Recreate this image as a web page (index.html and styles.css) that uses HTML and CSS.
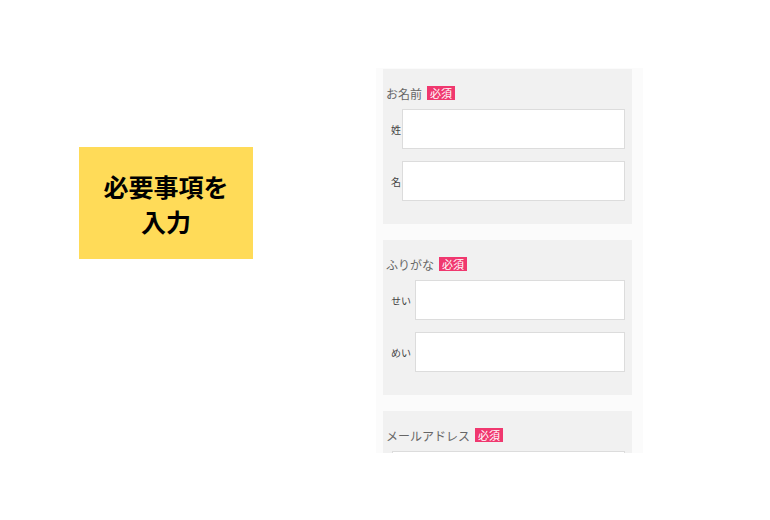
FILE: index.html
```html
<!DOCTYPE html>
<html lang="ja">
<head>
    <meta charset="UTF-8">
    <meta name="viewport" content="width=device-width, initial-scale=1.0">
    <title>必要事項を入力</title>
    <link rel="stylesheet" href="styles.css">
</head>
<body>
    <div class="page">
        <div class="callout">必要事項を<br>入力</div>

        <div class="shot">
            <div class="group">
                <div class="group-title">お名前<span class="req">必須</span></div>
                <div class="row">
                    <span class="row-label">姓</span>
                    <div class="field"></div>
                </div>
                <div class="row">
                    <span class="row-label">名</span>
                    <div class="field"></div>
                </div>
            </div>

            <div class="group">
                <div class="group-title">ふりがな<span class="req">必須</span></div>
                <div class="row">
                    <span class="row-label kana">せい</span>
                    <div class="field"></div>
                </div>
                <div class="row">
                    <span class="row-label kana">めい</span>
                    <div class="field"></div>
                </div>
            </div>

            <div class="group">
                <div class="group-title">メールアドレス<span class="req">必須</span></div>
                <div class="row plain">
                    <div class="field"></div>
                </div>
            </div>
        </div>
    </div>
</body>
</html>
```

FILE: styles.css
```css
body {
    margin: 0;
    background: #fff;
    font-family: "Noto Sans CJK JP", "Noto Sans", sans-serif;
}
.page {
    display: flex;
    align-items: flex-start;
    padding: 68px 0 0 79px;
    gap: 123px;
}
.callout {
    margin-top: 79px;
    width: 174px;
    height: 112px;
    background: #ffdb58;
    display: flex;
    align-items: center;
    justify-content: center;
    text-align: center;
    font-size: 25px;
    font-weight: 700;
    line-height: 35px;
    color: #000;
    padding-top: 2px;
    box-sizing: border-box;
}
.shot {
    width: 267px;
    height: 385px;
    overflow: hidden;
    background: #fbfbfb;
    padding: 1px 11px 0 7px;
    box-sizing: border-box;
}
.group {
    background: #f1f1f1;
    padding: 17px 7px 23px 0;
    margin-bottom: 16px;
}
.group-title {
    display: flex;
    align-items: center;
    height: 14px;
    padding-left: 3px;
    font-size: 12px;
    color: #666;
    margin-bottom: 9px;
}
.req {
    display: inline-block;
    background: #f0386f;
    color: #fff;
    font-size: 11px;
    line-height: 14px;
    height: 14px;
    padding: 0 3px;
    margin-left: 5px;
}
.row {
    display: flex;
    align-items: center;
    padding-left: 8px;
    margin-bottom: 12px;
}
.row:last-child {
    margin-bottom: 0;
}
.row-label {
    font-size: 10px;
    color: #444;
    margin-right: 1px;
}
.row-label.kana {
    margin-right: 4px;
}
.row.plain {
    padding-left: 9px;
}
.field {
    flex: 1;
    height: 40px;
    background: #fff;
    border: 1px solid #dcdcdc;
    box-sizing: border-box;
}
```
